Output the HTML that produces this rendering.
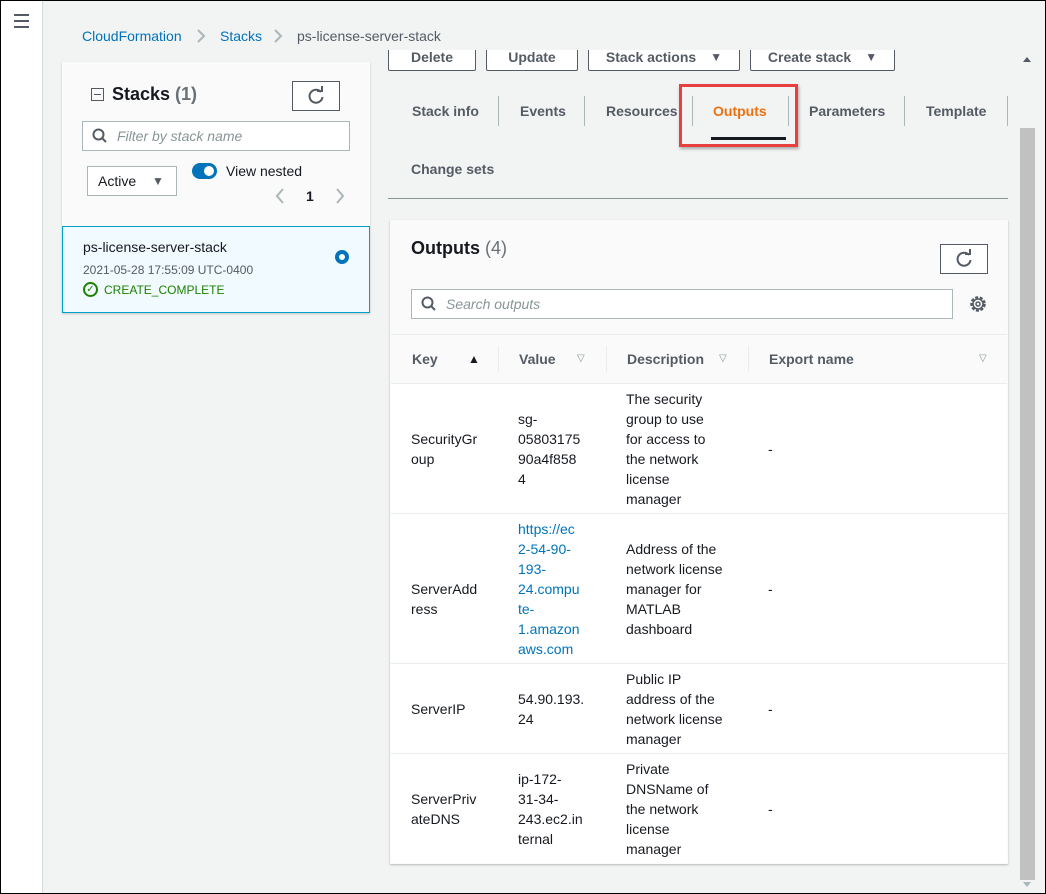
<!DOCTYPE html>
<html><head><meta charset="utf-8"><style>
*{box-sizing:border-box;margin:0;padding:0}
body{width:1046px;height:894px;overflow:hidden;background:#f2f3f3;font-family:"Liberation Sans",sans-serif;font-size:14px;color:#16191f;position:relative}
.a{position:absolute}
.frame{position:absolute;left:0;top:0;width:1046px;height:894px;border:1px solid #000;pointer-events:none}
.side{left:0;top:0;width:43px;height:894px;background:#fff;border-right:1px solid #d5dbdb}
.btn{position:absolute;top:50px;height:21px;border:1px solid #545b64;border-top:none;background:#fff;font-weight:bold;color:#545b64;font-size:14px;display:flex;align-items:center;justify-content:center;gap:14px;border-radius:0 0 2px 2px;padding-bottom:7px;line-height:14px;overflow:hidden}
.tab{position:absolute;top:103px;font-weight:bold;color:#545b64;font-size:14px}
.vs{position:absolute;top:96px;width:1px;height:30px;background:#aab7b8}
.cell{position:absolute;line-height:20px;font-size:14px;color:#16191f}
.hr{position:absolute;left:391px;width:616px;height:1px;background:#eaeded}
.th{position:absolute;top:351px;font-weight:bold;color:#545b64}
.tri{font-size:10px;color:#879596}
</style></head><body>
<div class="a side"></div>
<div class="a" style="left:14px;top:14px;width:15px;">
 <div style="height:2px;background:#545b64;margin-bottom:4px"></div>
 <div style="height:2px;background:#545b64;margin-bottom:4px"></div>
 <div style="height:2px;background:#545b64"></div>
</div>
<div class="a" style="left:82px;top:28px;font-size:14px;color:#0073bb">CloudFormation</div>
<svg class="a" style="left:196px;top:29px" width="10" height="14"><path d="M2 1 L8 7 L2 13" fill="none" stroke="#aab7b8" stroke-width="2"/></svg>
<div class="a" style="left:220px;top:28px;color:#0073bb">Stacks</div>
<svg class="a" style="left:273px;top:29px" width="10" height="14"><path d="M2 1 L8 7 L2 13" fill="none" stroke="#aab7b8" stroke-width="2"/></svg>
<div class="a" style="left:297px;top:28px;color:#545b64">ps-license-server-stack</div>

<!-- left panel -->
<div class="a" style="left:62px;top:62px;width:308px;height:251px;background:#fafafa;box-shadow:0 1px 2px rgba(0,0,0,.2)"></div>
<div class="a" style="left:91px;top:88px;width:13px;height:13px;border:1.5px solid #545b64"><div style="margin:4.5px 2px 0;height:1.5px;background:#545b64"></div></div>
<div class="a" style="left:112px;top:84px;font-size:18px;font-weight:bold">Stacks <span style="color:#687078">(1)</span></div>
<div class="a" style="left:292px;top:81px;width:48px;height:30px;border:1px solid #545b64;background:#fff"></div>
<svg class="a" style="left:306px;top:86px" width="20" height="20" viewBox="0 0 20 20"><path d="M15 6 A6.5 6.5 0 1 0 16.5 11" fill="none" stroke="#545b64" stroke-width="2"/><path d="M11 5 L16 5 L16 0" fill="none" stroke="#545b64" stroke-width="2"/></svg>
<div class="a" style="left:82px;top:121px;width:268px;height:30px;border:1px solid #aab7b8;background:#fff;"></div>
<svg class="a" style="left:92px;top:128px" width="16" height="16"><circle cx="6.5" cy="6.5" r="5" fill="none" stroke="#545b64" stroke-width="2"/><line x1="10" y1="10" x2="14" y2="14" stroke="#545b64" stroke-width="2"/></svg>
<div class="a" style="left:117px;top:128px;font-style:italic;color:#879596;font-size:14px">Filter by stack name</div>
<div class="a" style="left:87px;top:166px;width:90px;height:30px;border:1px solid #aab7b8;background:#fff;padding-left:10px;line-height:28px">Active <span style="position:absolute;left:64px;font-size:12px;color:#545b64">&#9660;</span></div>
<div class="a" style="left:192px;top:163px;width:25px;height:16px;border-radius:8px;background:#0073bb"><div style="position:absolute;right:3px;top:3px;width:10px;height:10px;border-radius:5px;background:#fff"></div></div>
<div class="a" style="left:226px;top:163px">View nested</div>
<svg class="a" style="left:275px;top:188px" width="10" height="16"><path d="M8 1 L2 8 L8 15" fill="none" stroke="#aab7b8" stroke-width="2"/></svg>
<div class="a" style="left:306px;top:188px;font-weight:bold">1</div>
<svg class="a" style="left:335px;top:188px" width="10" height="16"><path d="M2 1 L8 8 L2 15" fill="none" stroke="#aab7b8" stroke-width="2"/></svg>
<div class="a" style="left:62px;top:226px;width:308px;height:87px;background:#f1faff;border:1px solid #00a1c9"></div>
<div class="a" style="left:83px;top:239px">ps-license-server-stack</div>
<div class="a" style="left:83px;top:263px;font-size:12px;color:#545b64">2021-05-28 17:55:09 UTC-0400</div>
<div class="a" style="left:83px;top:282px;width:15px;height:15px;border:2px solid #1d8102;border-radius:50%;color:#1d8102;font-size:10px;line-height:11px;text-align:center">&#x2713;</div>
<div class="a" style="left:104px;top:283px;font-size:12px;color:#1d8102">CREATE_COMPLETE</div>
<div class="a" style="left:335px;top:250px;width:14px;height:14px;border-radius:50%;border:4px solid #0073bb;background:#fff"></div>

<!-- buttons -->
<div class="btn" style="left:388px;width:88px">Delete</div>
<div class="btn" style="left:486px;width:92px">Update</div>
<div class="btn" style="left:588px;width:152px">Stack actions <span style="font-size:12px">&#9660;</span></div>
<div class="btn" style="left:750px;width:145px">Create stack <span style="font-size:12px">&#9660;</span></div>

<!-- tabs -->
<div class="tab" style="left:412px">Stack info</div><div class="vs" style="left:498px"></div>
<div class="tab" style="left:520px">Events</div><div class="vs" style="left:584px"></div>
<div class="tab" style="left:606px">Resources</div>
<div class="vs" style="left:692px"></div>
<div class="tab" style="left:713px;color:#ec7211">Outputs</div>
<div class="a" style="left:711px;top:137px;width:75px;height:3px;background:#16191f"></div>
<div class="vs" style="left:788px"></div>
<div class="a" style="left:679px;top:84px;width:119px;height:63px;border:3px solid #e8403f;box-shadow:1px 2px 3px rgba(0,0,0,.3)"></div>
<div class="tab" style="left:809px">Parameters</div><div class="vs" style="left:904px"></div>
<div class="tab" style="left:926px">Template</div><div class="vs" style="left:1007px"></div>
<div class="tab" style="left:411px;top:161px">Change sets</div>
<div class="a" style="left:388px;top:198px;width:620px;height:1px;background:#879596"></div>

<!-- outputs panel -->
<div class="a" style="left:390px;top:220px;width:618px;height:644px;background:#fafafa;box-shadow:0 1px 2px rgba(0,0,0,.25)"></div>
<div class="a" style="left:391px;top:384px;width:616px;height:479px;background:#fff"></div>
<div class="a" style="left:411px;top:238px;font-size:18px;font-weight:bold">Outputs <span style="font-weight:normal;color:#687078">(4)</span></div>
<div class="a" style="left:940px;top:244px;width:48px;height:30px;border:1px solid #545b64;background:#fff"></div>
<svg class="a" style="left:954px;top:249px" width="20" height="20" viewBox="0 0 20 20"><path d="M15 6 A6.5 6.5 0 1 0 16.5 11" fill="none" stroke="#545b64" stroke-width="2"/><path d="M11 5 L16 5 L16 0" fill="none" stroke="#545b64" stroke-width="2"/></svg>
<div class="a" style="left:411px;top:289px;width:542px;height:30px;border:1px solid #aab7b8;background:#fff"></div>
<svg class="a" style="left:421px;top:296px" width="16" height="16"><circle cx="6.5" cy="6.5" r="5" fill="none" stroke="#545b64" stroke-width="2"/><line x1="10" y1="10" x2="14" y2="14" stroke="#545b64" stroke-width="2"/></svg>
<div class="a" style="left:446px;top:296px;font-style:italic;color:#879596">Search outputs</div>
<svg class="a" style="left:969px;top:295px" width="18" height="18" viewBox="0 0 18 18"><circle cx="9" cy="9" r="6.5" fill="none" stroke="#545b64" stroke-width="2.5" stroke-dasharray="3 1.6"/><circle cx="9" cy="9" r="5" fill="none" stroke="#545b64" stroke-width="1.5"/><circle cx="9" cy="9" r="2" fill="none" stroke="#545b64" stroke-width="1.5"/></svg>
<div class="hr" style="top:334px"></div>
<div class="th" style="left:412px">Key</div><div class="a" style="left:468px;top:352px;font-size:12px">&#9650;</div>
<div class="vs" style="left:498px;top:346px;height:26px;background:#eaeded"></div>
<div class="th" style="left:519px">Value</div><div class="a tri" style="left:577px;top:353px">&#9661;</div>
<div class="vs" style="left:606px;top:346px;height:26px;background:#eaeded"></div>
<div class="th" style="left:627px">Description</div><div class="a tri" style="left:719px;top:353px">&#9661;</div>
<div class="vs" style="left:748px;top:346px;height:26px;background:#eaeded"></div>
<div class="th" style="left:769px">Export name</div><div class="a tri" style="left:979px;top:353px">&#9661;</div>
<div class="hr" style="top:383px"></div>

<div class="cell" style="left:411px;top:429px">SecurityGr<br>oup</div>
<div class="cell" style="left:518px;top:409px">sg-<br>05803175<br>90a4f858<br>4</div>
<div class="cell" style="left:626px;top:389px">The security<br>group to use<br>for access to<br>the network<br>license<br>manager</div>
<div class="cell" style="left:768px;top:439px">-</div>
<div class="hr" style="top:513px"></div>

<div class="cell" style="left:411px;top:579px">ServerAdd<br>ress</div>
<div class="cell" style="left:518px;top:519px;color:#0073bb">https://ec<br>2-54-90-<br>193-<br>24.compu<br>te-<br>1.amazon<br>aws.com</div>
<div class="cell" style="left:626px;top:539px">Address of the<br>network license<br>manager for<br>MATLAB<br>dashboard</div>
<div class="cell" style="left:768px;top:579px">-</div>
<div class="hr" style="top:663px"></div>

<div class="cell" style="left:411px;top:699px">ServerIP</div>
<div class="cell" style="left:518px;top:689px">54.90.193.<br>24</div>
<div class="cell" style="left:626px;top:669px">Public IP<br>address of the<br>network license<br>manager</div>
<div class="cell" style="left:768px;top:699px">-</div>
<div class="hr" style="top:753px"></div>

<div class="cell" style="left:411px;top:789px">ServerPriv<br>ateDNS</div>
<div class="cell" style="left:518px;top:769px">ip-172-<br>31-34-<br>243.ec2.in<br>ternal</div>
<div class="cell" style="left:626px;top:759px">Private<br>DNSName of<br>the network<br>license<br>manager</div>
<div class="cell" style="left:768px;top:799px">-</div>

<!-- scrollbar -->
<div class="a" style="left:1020px;top:52px;width:15px;height:842px;background:#f2f3f3"></div>
<svg class="a" style="left:1023px;top:57px" width="8" height="6"><path d="M0 5 L4 0 L8 5Z" fill="#545b64"/></svg>
<div class="a" style="left:1020px;top:128px;width:15px;height:752px;background:#c1c1c1"></div>
<svg class="a" style="left:1023px;top:882px" width="8" height="6"><path d="M0 0 L4 5 L8 0Z" fill="#aab7b8"/></svg>
<div class="frame"></div>
</body></html>
